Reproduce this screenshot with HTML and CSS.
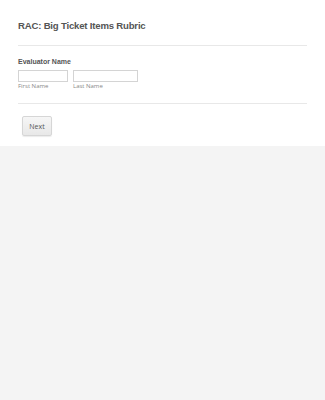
FILE: index.html
```html
<!DOCTYPE html>
<html>
<head>
  <title>RAC: Big Ticket Items Rubric</title>
  <meta charset="UTF-8">
  <meta name="viewport" content="width=device-width, initial-scale=1.0">
  <link rel="stylesheet" href="styles.css">
</head>
<body>
  <div class="form">

    <!-- Header -->
    <div class="header">
      <h1>RAC: Big Ticket Items Rubric</h1>
    </div>

    <!-- Name field -->
    <div class="field">
      <label class="field-label">Evaluator Name</label>
      <div class="name-row">
        <div class="name-part">
          <input type="text" class="first" id="first">
          <label for="first" class="sublabel">First Name</label>
        </div>
        <div class="name-part">
          <input type="text" class="last" id="last">
          <label for="last" class="sublabel">Last Name</label>
        </div>
      </div>
    </div>

    <div class="actions">
      <button type="button">Next</button>
    </div>

  </div>
</body>
</html>
```

FILE: styles.css
```css
body {
  margin: 0;
  background: #f4f4f4;
  font-family: 'Liberation Sans', Arial, sans-serif;
  color: #555;
}

.form {
  background: #ffffff;
  padding: 0 18px;
  height: 146px;
  box-sizing: border-box;
}

.header {
  padding-top: 19px;
  padding-bottom: 12px;
  border-bottom: 1px solid #e8e8e8;
}

h1 {
  margin: 0;
  font-size: 9.6px;
  font-weight: bold;
  letter-spacing: -0.2px;
  color: #555;
  line-height: 14px;
}

.field {
  padding-top: 11px;
  padding-bottom: 13px;
  border-bottom: 1px solid #e8e8e8;
}

.field-label {
  display: block;
  font-size: 7px;
  font-weight: bold;
  color: #555;
  line-height: 10px;
  margin-bottom: 3px;
}

.name-row {
  display: flex;
  gap: 5px;
}

.name-part {
  display: flex;
  flex-direction: column;
}

input[type="text"] {
  height: 12px;
  margin: 0;
  padding: 0;
  border: 1px solid #d4d4d4;
  box-sizing: border-box;
  background: #fff;
}

.first {
  width: 50px;
}

.last {
  width: 65px;
}

.sublabel {
  font-family: 'Open Sans', sans-serif;
  font-size: 6px;
  color: #888;
  line-height: 8px;
}

.actions {
  padding-top: 12px;
  padding-left: 4px;
}

button {
  display: block;
  width: 30px;
  height: 20px;
  padding: 0;
  font-family: 'Open Sans', sans-serif;
  font-size: 7px;
  color: #555;
  background: linear-gradient(#f6f6f6, #e8e8e8);
  border: 1px solid #d6d6d6;
  border-radius: 2px;
  box-shadow: 0 1px 1px rgba(0, 0, 0, 0.08);
  cursor: pointer;
}
```
